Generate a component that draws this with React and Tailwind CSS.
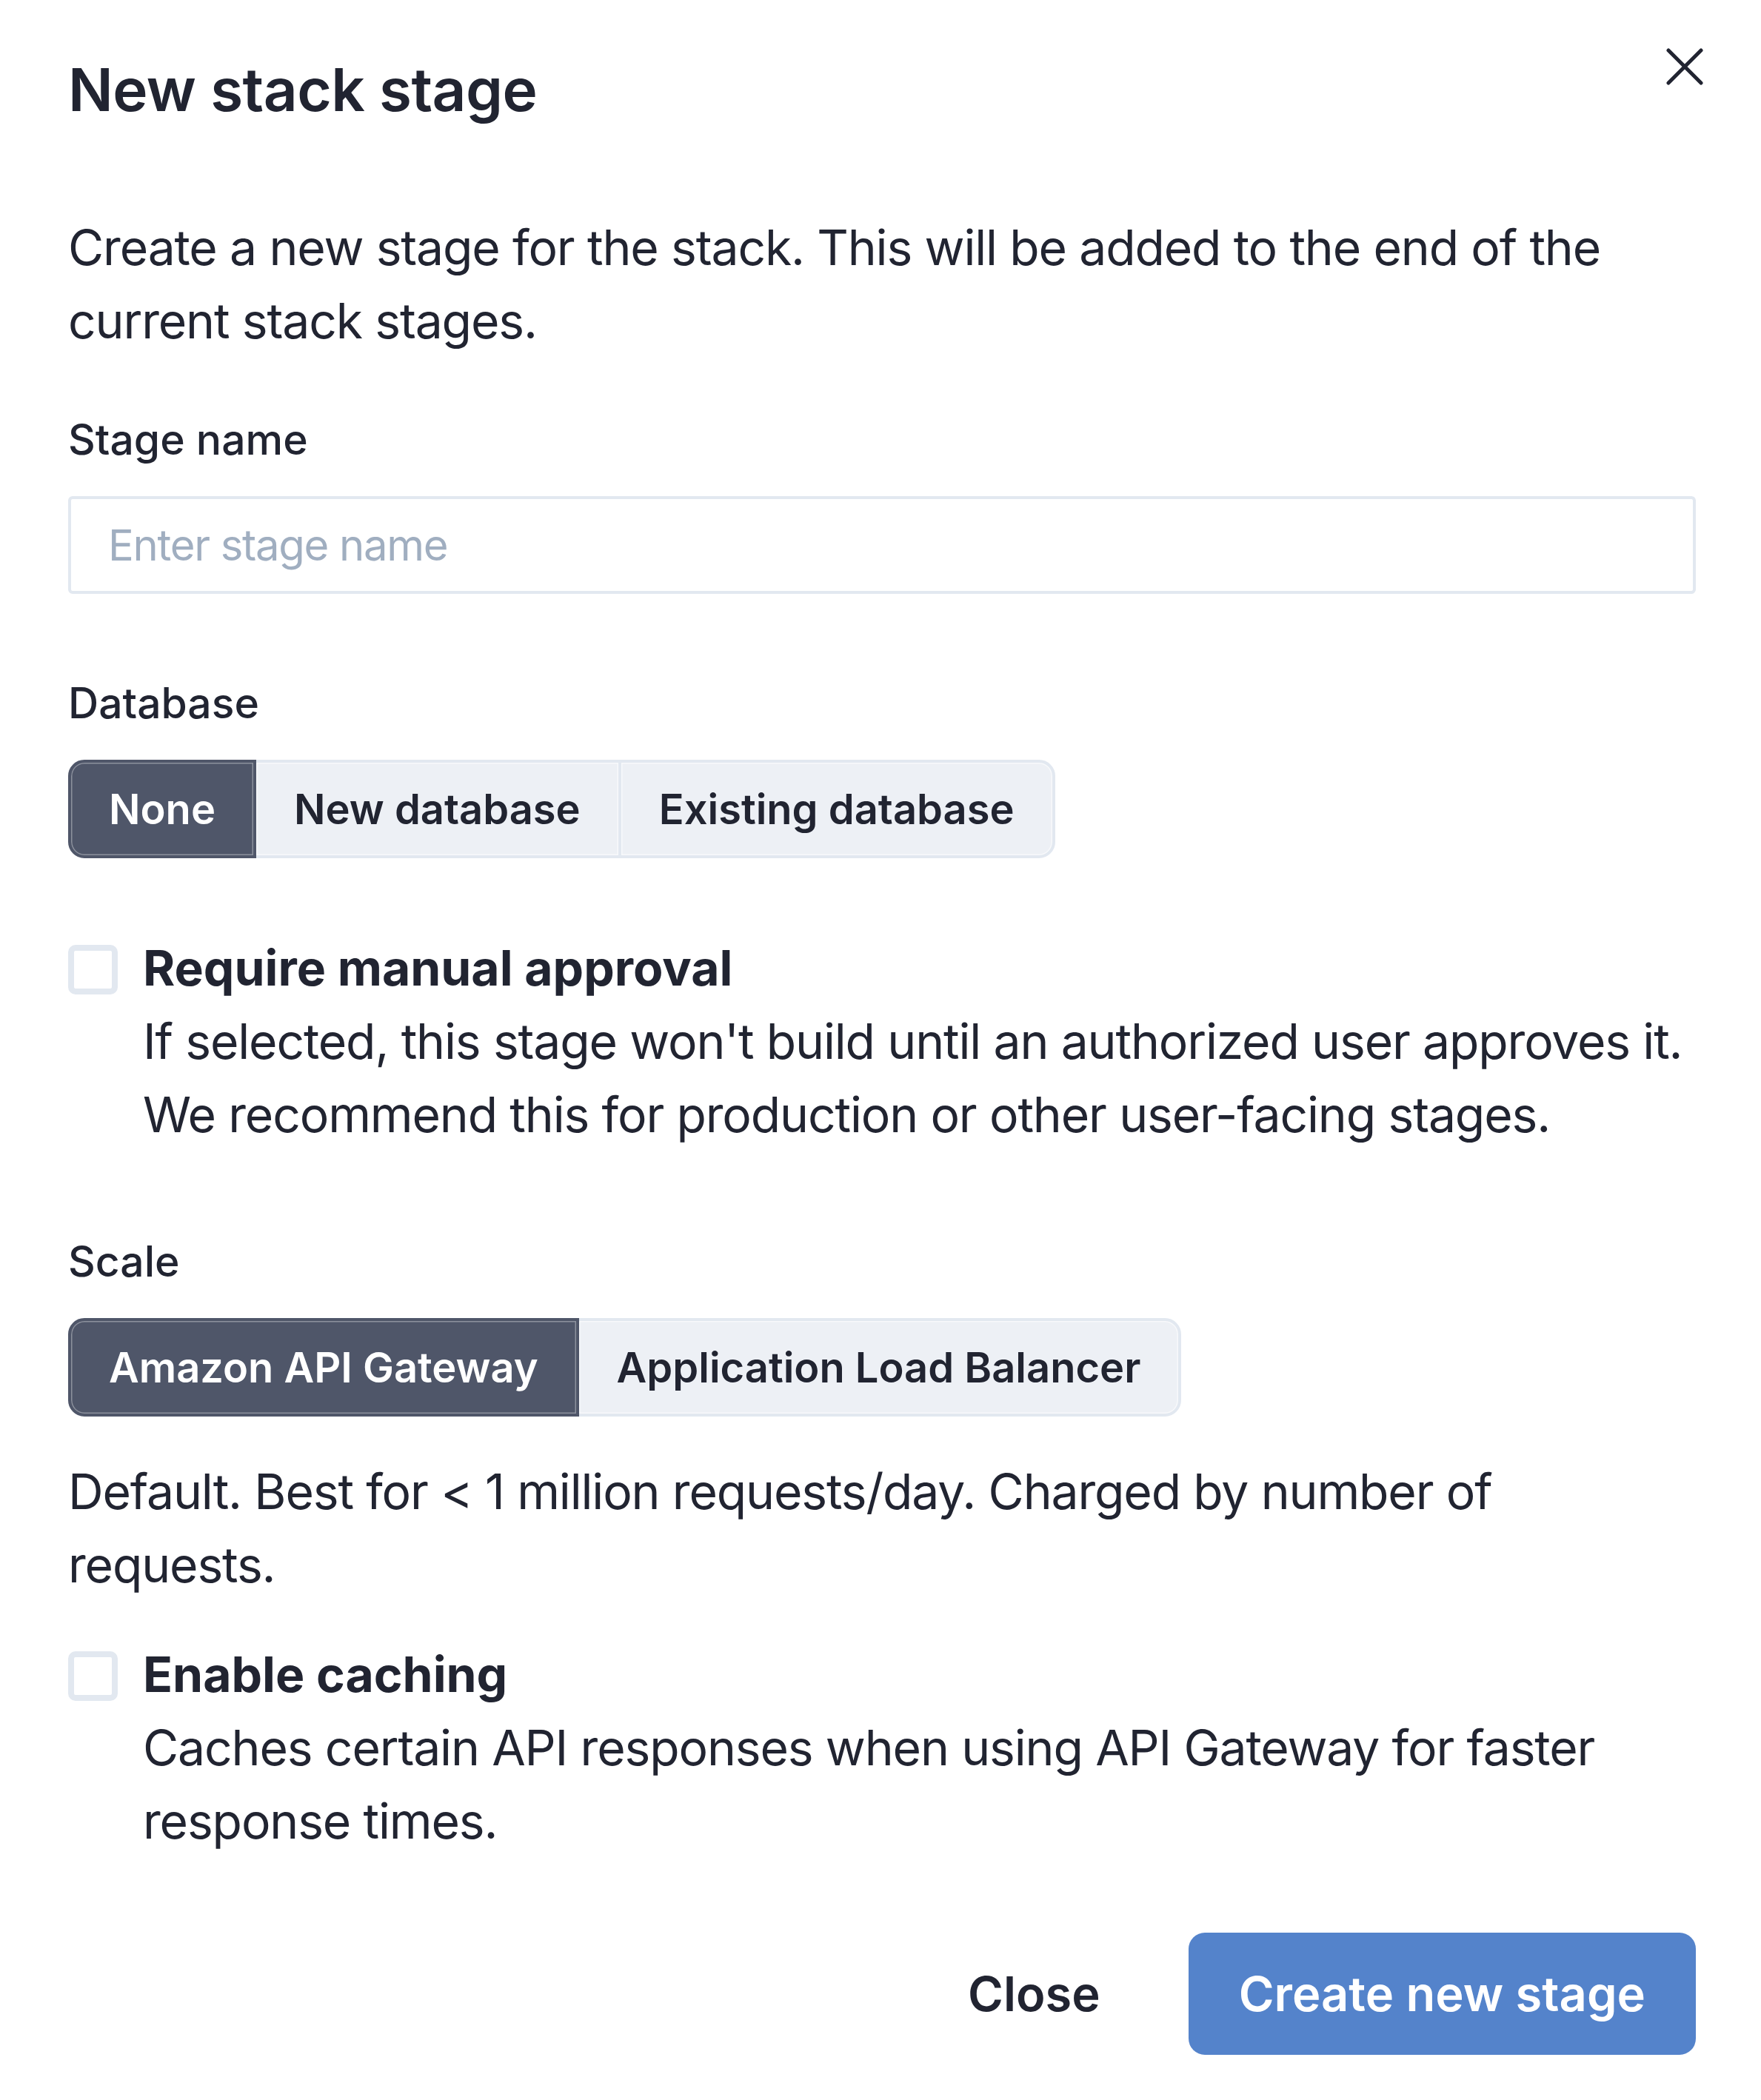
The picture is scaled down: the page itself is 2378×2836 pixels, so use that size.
import React from "react";

const font = { fontFamily: "Inter, 'Noto Sans', sans-serif" };

function Segmented({ options, active }) {
  return (
    <div className="flex">
      {options.map((o, i) => {
        const isActive = i === active;
        const first = i === 0;
        const last = i === options.length - 1;
        return (
          <div
            key={o}
            className={
              "relative flex h-[133px] items-center border-[4px] px-[51px] text-[56px] font-semibold " +
              (first ? "rounded-l-[22px] " : "-ml-[4px] ") +
              (last ? "rounded-r-[22px] " : "") +
              (isActive
                ? "z-10 border-[#4f5669] bg-[#4f5669] text-white shadow-[inset_0_0_0_1.5px_rgba(255,255,255,0.35)]"
                : "border-[#e2e8f0] bg-[#edf0f5] text-[#212431] shadow-[inset_0_0_0_1.5px_rgba(255,255,255,0.6)]")
            }
          >
            {o}
          </div>
        );
      })}
    </div>
  );
}

function CheckRow({ label, children }) {
  return (
    <div className="flex items-start">
      <div className="mt-[18px] h-[67px] w-[67px] shrink-0 rounded-[10px] border-[8px] border-[#e2e8f0] bg-white" />
      <div className="ml-[34px] text-[66px] leading-[99px]">
        <div className="font-bold">{label}</div>
        <div className="tracking-[-1.15px]">{children}</div>
      </div>
    </div>
  );
}

export default function App() {
  return (
    <div
      className="min-h-[2836px] w-[2378px] bg-white pb-[60px] pl-[92px] pr-[88px] pt-[71px] text-[#212431]"
      style={font}
    >
      <div className="flex items-start justify-between">
        <h1 className="text-[80px] font-semibold leading-[100px] tracking-[-0.5px]">New stack stage</h1>
        <svg
          className="-mr-[10px] -mt-[6px]"
          width="50"
          height="50"
          viewBox="0 0 50 50"
          fill="none"
          stroke="#212431"
          strokeWidth="5"
          strokeLinecap="round"
        >
          <path d="M3 3L47 47M47 3L3 47" />
        </svg>
      </div>

      <p className="mt-[114px] text-[66px] leading-[99px] tracking-[-1.15px]">
        Create a new stage for the stack. This will be added to the end of the current stack stages.
      </p>

      <div className="mt-[70px] text-[57px] font-medium leading-[82px]">Stage name</div>
      <input
        className="mt-[35px] box-border h-[132px] w-full rounded-[6px] border-[4px] border-[#e2e8f0] px-[50px] text-[58px] tracking-[-1.3px] outline-none placeholder:text-[#a0aec0]"
        placeholder="Enter stage name"
        style={font}
      />

      <div className="mt-[107px] text-[57px] font-medium leading-[82px]">Database</div>
      <div className="mt-[35px]">
        <Segmented options={["None", "New database", "Existing database"]} active={0} />
      </div>

      <div className="mt-[99px]">
        <CheckRow label="Require manual approval">
          If selected, this stage won't build until an authorized user approves it. We recommend this
          for production or other user-facing stages.
        </CheckRow>
      </div>

      <div className="mt-[108px] text-[57px] font-medium leading-[82px]">Scale</div>
      <div className="mt-[35px]">
        <Segmented options={["Amazon API Gateway", "Application Load Balancer"]} active={0} />
      </div>

      <p className="mt-[52px] text-[66px] leading-[99px] tracking-[-1.15px]">
        Default. Best for &lt; 1 million requests/day. Charged by number of requests.
      </p>

      <div className="mt-[49px]">
        <CheckRow label="Enable caching">
          Caches certain API responses when using API Gateway for faster response times.
        </CheckRow>
      </div>

      <div className="mt-[101px] flex items-center justify-end">
        <button className="mr-[119px] text-[65px] font-semibold text-[#212431]" style={font}>
          Close
        </button>
        <button
          className="flex h-[165px] items-center rounded-[22px] bg-[#5483cb] px-[68px] text-[65px] font-semibold text-white"
          style={font}
        >
          Create new stage
        </button>
      </div>
    </div>
  );
}
